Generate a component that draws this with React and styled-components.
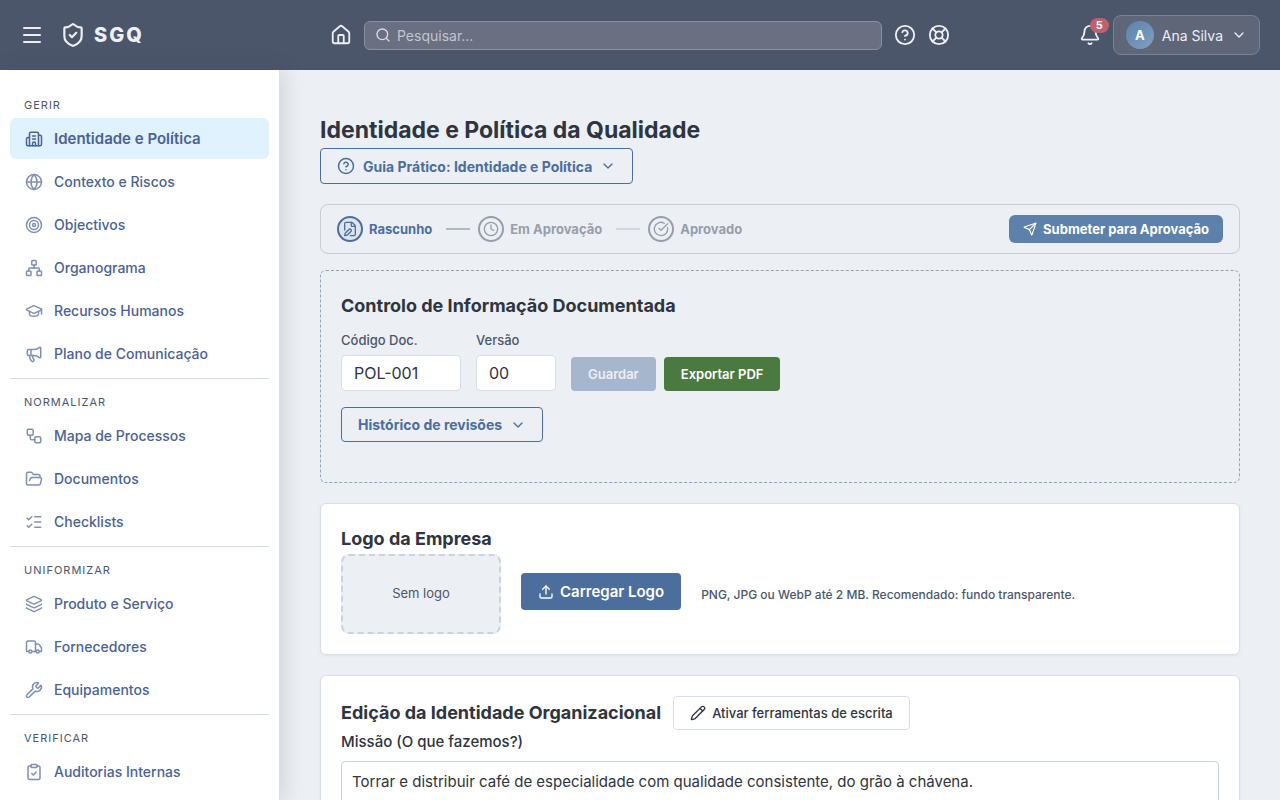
import React, { useState } from 'react';
import styled, { createGlobalStyle, css } from 'styled-components';
import {
  Bell,
  Building2,
  ChevronDown,
  CircleCheckBig,
  CircleHelp,
  ClipboardCheck,
  Clock,
  FilePen,
  FolderOpen,
  Globe,
  GraduationCap,
  House,
  Layers,
  LifeBuoy,
  ListChecks,
  Megaphone,
  Menu,
  Network,
  Pencil,
  Search,
  Send,
  ShieldCheck,
  Target,
  Truck,
  Upload,
  Workflow,
  Wrench,
} from 'lucide-react';

const GlobalStyle = createGlobalStyle`
  * {
    box-sizing: border-box;
  }

  body {
    margin: 0;
    background: #eceff4;
    color: #2e3440;
    font-family: Inter, sans-serif;
    font-size: 15px;
  }

  button, input, textarea {
    font-family: inherit;
  }
`

const Page = styled.div`
  display: flex;
  flex-direction: column;
  height: 100vh;
  overflow: hidden;
`

const Header = styled.header`
  display: grid;
  grid-template-columns: 1fr minmax(0, 620px) 1fr;
  align-items: center;
  flex-shrink: 0;
  height: 70px;
  padding: 0 20px;
  background: #4c566a;
  color: #eceff4;
`

const HeaderLeft = styled.div`
  display: flex;
  align-items: center;
  gap: 16px;
`

const HeaderCenter = styled.div`
  display: flex;
  align-items: center;
  gap: 12px;
`

const HeaderRight = styled.div`
  display: flex;
  align-items: center;
  justify-content: flex-end;
  gap: 12px;
`

const IconButton = styled.button`
  position: relative;
  display: flex;
  padding: 0;
  border: none;
  background: none;
  color: inherit;
  cursor: pointer;
`

const Brand = styled.a`
  display: flex;
  align-items: center;
  gap: 8px;
  color: inherit;
  font-size: 20px;
  font-weight: 800;
  letter-spacing: 2px;
  text-decoration: none;
`

const SearchBox = styled.label`
  display: flex;
  flex: 1;
  align-items: center;
  gap: 6px;
  height: 29px;
  padding: 0 10px;
  border: 1px solid #8a90a0;
  border-radius: 6px;
  background: #6b6f82;
  color: #d8dee9;
`

const SearchInput = styled.input`
  flex: 1;
  min-width: 0;
  padding: 0;
  border: none;
  outline: none;
  background: none;
  color: #eceff4;
  font-size: 14px;

  &::placeholder {
    color: #c2c6d0;
    opacity: 1;
  }
`

const Badge = styled.span`
  position: absolute;
  top: -6px;
  right: -8px;
  height: 15px;
  padding: 0 6px;
  border-radius: 8px;
  background: #bf616a;
  color: white;
  font-size: 11px;
  font-weight: 700;
  line-height: 15px;
`

const UserButton = styled.button`
  display: flex;
  align-items: center;
  gap: 8px;
  height: 40px;
  padding: 0 12px;
  border: 1px solid #7b8392;
  border-radius: 8px;
  background: #5e6678;
  color: #eceff4;
  font-size: 14px;
  cursor: pointer;
`

const Avatar = styled.span`
  display: flex;
  align-items: center;
  justify-content: center;
  width: 28px;
  height: 28px;
  border-radius: 50%;
  background: linear-gradient(135deg, #5e81ac, #81a1c1);
  color: white;
  font-size: 13px;
  font-weight: 700;
`

const Body = styled.div`
  display: flex;
  flex: 1;
  min-height: 0;
`

const Sidebar = styled.nav`
  width: 280px;
  flex-shrink: 0;
  padding: 12px 10px;
  overflow: hidden;
  border-right: 1px solid #d8dee9;
  background: white;
  box-shadow: 4px 0 20px rgba(46, 52, 64, 0.15);
`

const NavGroup = styled.div`
  display: flex;
  flex-direction: column;
  gap: 2px;
  padding-bottom: 4px;

  & + & {
    border-top: 1px solid #d3daea;
  }
`

const NavTitle = styled.div`
  height: 34px;
  padding: 16px 14px 0;
  color: #4c566a;
  font-size: 11px;
  font-weight: 400;
  letter-spacing: 1px;
  line-height: 14px;
`

const NavItem = styled.a`
  display: flex;
  align-items: center;
  gap: 10px;
  height: 41px;
  padding: 0 14px;
  border-radius: 6px;
  background: ${props => props.$active ? "#e0f2fe" : "transparent"};
  color: #4a6294;
  font-size: ${props => props.$active ? "15px" : "14px"};
  font-weight: ${props => props.$active ? 600 : 500};
  text-decoration: none;

  svg {
    width: 20px;
    height: 18px;
    opacity: ${props => props.$active ? 1 : 0.7};
  }
`

const Main = styled.main`
  flex: 1;
  min-width: 0;
  padding: 43px 40px;
  overflow: hidden;
`

const PageTitle = styled.h1`
  margin: 0 0 1px;
  font-size: 23px;
  font-weight: 700;
  line-height: 34px;
`

const OutlineButton = styled.button`
  display: flex;
  align-items: center;
  gap: 8px;
  height: ${props => props.$tall ? "36px" : "35px"};
  padding: 0 16px;
  border: 1px solid #4c6e9c;
  border-radius: 4px;
  background: transparent;
  color: #4c6e9c;
  font-size: 14px;
  font-weight: 700;
  cursor: pointer;
`

const WorkflowBar = styled.div`
  display: flex;
  align-items: center;
  justify-content: space-between;
  height: 50px;
  margin: 20px 0 16px;
  padding: 0 16px;
  border: 1px solid #c9ced6;
  border-radius: 8px;
`

const Steps = styled.ol`
  display: flex;
  align-items: center;
  gap: 8px;
  margin: 0;
  padding: 0;
  list-style: none;
`

const Step = styled.li`
  display: flex;
  align-items: center;
  gap: 6px;
  padding-right: 6px;
  color: ${props => props.$current ? "#4c6e9c" : "#979eab"};
  font-size: 13px;
  font-weight: 700;
`

const StepCircle = styled.span`
  display: flex;
  align-items: center;
  justify-content: center;
  width: 26px;
  height: 26px;
  border: 2px solid currentColor;
  border-radius: 50%;
  background: ${props => props.$current ? "#dde4ed" : "transparent"};
`

const StepLine = styled.li`
  width: 24px;
  height: 2px;
  background: ${props => props.$light ? "#cfd4dd" : "#b2b8c4"};
`

const SubmitButton = styled.button`
  display: flex;
  align-items: center;
  gap: 6px;
  height: 28px;
  padding: 0 14px;
  border: none;
  border-radius: 6px;
  background: #5e81ac;
  color: white;
  font-size: 13px;
  font-weight: 700;
  cursor: pointer;
`

const Card = styled.section`
  margin-bottom: 20px;
  padding: 20px;
  border: 1px solid #d8dee9;
  border-radius: 6px;
  background: white;
  box-shadow: 0 1px 3px rgba(46, 52, 64, 0.06);

  ${props => props.$dashed && css`
    padding-bottom: 40px;
    border: 1px dashed #8fa3bf;
    background: transparent;
    box-shadow: none;
  `}
`

const CardTitle = styled.h2`
  margin: 0;
  font-size: 18px;
  font-weight: 700;
  line-height: 30px;
`

const FieldRow = styled.div`
  display: flex;
  align-items: flex-end;
  gap: 15px;
  margin: 9px 0 16px;
`

const Field = styled.label`
  display: flex;
  flex-direction: column;
  gap: 5px;
  width: ${props => props.$wide ? "120px" : "80px"};
  color: #4c566a;
  font-size: 13px;
  font-weight: 500;
  line-height: 20px;
`

const TextInput = styled.input`
  width: 100%;
  height: 36px;
  padding: 0 12px;
  border: 1px solid #d8dee9;
  border-radius: 4px;
  background: white;
  color: #2e3440;
  font-size: 16px;
`

const ButtonGroup = styled.div`
  display: flex;
  gap: 8px;
`

const SmallButton = styled.button`
  height: 34px;
  padding: 0 17px;
  border: none;
  border-radius: 4px;
  background: ${props => props.$green ? "#4a7a3f" : "#a6b6cd"};
  color: ${props => props.$green ? "white" : "#eceff4"};
  font-size: 13px;
  font-weight: 600;
`

const LogoRow = styled.div`
  display: flex;
  align-items: center;
  gap: 20px;
`

const LogoPreview = styled.div`
  display: flex;
  align-items: center;
  justify-content: center;
  width: 160px;
  height: 80px;
  padding-bottom: 2px;
  border: 2px dashed #c8d3e3;
  border-radius: 8px;
  background: #eceff4;
  color: #4c566a;
  font-size: 13px;
`

const UploadButton = styled.button`
  display: flex;
  align-items: center;
  gap: 6px;
  height: 37px;
  margin-bottom: 5px;
  padding: 0 17px;
  border: none;
  border-radius: 4px;
  background: #4c6e9c;
  color: white;
  font-size: 15px;
  font-weight: 600;
  cursor: pointer;
`

const Hint = styled.span`
  color: #4c566a;
  font-size: 12px;
  font-weight: 500;
`

const TitleRow = styled.div`
  display: flex;
  align-items: center;
  gap: 12px;
`

const ToolsButton = styled.button`
  display: flex;
  align-items: center;
  gap: 6px;
  height: 34px;
  padding: 0 16px;
  border: 1px solid #d8dee9;
  border-radius: 4px;
  background: white;
  color: #2e3440;
  font-size: 13px;
  font-weight: 500;
  cursor: pointer;
`

const TextLabel = styled.label`
  display: block;
  margin-bottom: 7px;
  font-weight: 500;
  line-height: 24px;
`

const TextArea = styled.textarea`
  display: block;
  width: 100%;
  height: 100px;
  padding: 8px 10px;
  border: 1px solid #c8d3e0;
  border-radius: 4px;
  color: #2e3440;
  font-size: 15px;
  line-height: 24px;
  resize: none;
`

const groups = [
  {
    title: 'GERIR',
    items: [
      { label: 'Identidade e Política', icon: Building2 },
      { label: 'Contexto e Riscos', icon: Globe },
      { label: 'Objectivos', icon: Target },
      { label: 'Organograma', icon: Network },
      { label: 'Recursos Humanos', icon: GraduationCap },
      { label: 'Plano de Comunicação', icon: Megaphone },
    ],
  },
  {
    title: 'NORMALIZAR',
    items: [
      { label: 'Mapa de Processos', icon: Workflow },
      { label: 'Documentos', icon: FolderOpen },
      { label: 'Checklists', icon: ListChecks },
    ],
  },
  {
    title: 'UNIFORMIZAR',
    items: [
      { label: 'Produto e Serviço', icon: Layers },
      { label: 'Fornecedores', icon: Truck },
      { label: 'Equipamentos', icon: Wrench },
    ],
  },
  {
    title: 'VERIFICAR',
    items: [
      { label: 'Auditorias Internas', icon: ClipboardCheck },
    ],
  },
]

const App = () => {
  const [active, setActive] = useState('Identidade e Política')
  const [code, setCode] = useState('POL-001')
  const [version, setVersion] = useState('00')
  const [mission, setMission] = useState('Torrar e distribuir café de especialidade com qualidade consistente, do grão à chávena.')

  return (
    <>
      <GlobalStyle />
      <Page>
        <Header>
          <HeaderLeft>
            <IconButton aria-label="Menu"><Menu size={24} /></IconButton>
            <Brand href="#"><ShieldCheck size={26} />SGQ</Brand>
          </HeaderLeft>
          <HeaderCenter>
            <IconButton aria-label="Início"><House size={22} /></IconButton>
            <SearchBox>
              <Search size={16} />
              <SearchInput placeholder="Pesquisar..." aria-label="Pesquisar" />
            </SearchBox>
            <IconButton aria-label="Ajuda"><CircleHelp size={22} /></IconButton>
            <IconButton aria-label="Suporte"><LifeBuoy size={22} /></IconButton>
          </HeaderCenter>
          <HeaderRight>
            <IconButton aria-label="Notificações">
              <Bell size={22} />
              <Badge>5</Badge>
            </IconButton>
            <UserButton>
              <Avatar>A</Avatar>
              Ana Silva
              <ChevronDown size={16} />
            </UserButton>
          </HeaderRight>
        </Header>
        <Body>
          <Sidebar>
            {groups.map(group => (
              <NavGroup key={group.title}>
                <NavTitle>{group.title}</NavTitle>
                {group.items.map(({ label, icon: Icon }) => (
                  <NavItem key={label} href="#" $active={label === active} onClick={() => setActive(label)}>
                    <Icon />
                    {label}
                  </NavItem>
                ))}
              </NavGroup>
            ))}
          </Sidebar>
          <Main>
            <PageTitle>Identidade e Política da Qualidade</PageTitle>
            <OutlineButton $tall>
              <CircleHelp size={18} />
              Guia Prático: Identidade e Política
              <ChevronDown size={16} />
            </OutlineButton>

            <WorkflowBar>
              <Steps>
                <Step $current>
                  <StepCircle $current><FilePen size={16} /></StepCircle>
                  Rascunho
                </Step>
                <StepLine />
                <Step>
                  <StepCircle><Clock size={16} /></StepCircle>
                  Em Aprovação
                </Step>
                <StepLine $light />
                <Step>
                  <StepCircle><CircleCheckBig size={16} /></StepCircle>
                  Aprovado
                </Step>
              </Steps>
              <SubmitButton><Send size={14} />Submeter para Aprovação</SubmitButton>
            </WorkflowBar>

            <Card $dashed>
              <CardTitle>Controlo de Informação Documentada</CardTitle>
              <FieldRow>
                <Field $wide>
                  Código Doc.
                  <TextInput value={code} onChange={e => setCode(e.target.value)} />
                </Field>
                <Field>
                  Versão
                  <TextInput value={version} onChange={e => setVersion(e.target.value)} />
                </Field>
                <ButtonGroup>
                  <SmallButton disabled>Guardar</SmallButton>
                  <SmallButton $green>Exportar PDF</SmallButton>
                </ButtonGroup>
              </FieldRow>
              <OutlineButton>
                Histórico de revisões
                <ChevronDown size={16} />
              </OutlineButton>
            </Card>

            <Card>
              <CardTitle>Logo da Empresa</CardTitle>
              <LogoRow>
                <LogoPreview>Sem logo</LogoPreview>
                <UploadButton><Upload size={16} />Carregar Logo</UploadButton>
                <Hint>PNG, JPG ou WebP até 2 MB. Recomendado: fundo transparente.</Hint>
              </LogoRow>
            </Card>

            <Card>
              <TitleRow>
                <CardTitle>Edição da Identidade Organizacional</CardTitle>
                <ToolsButton><Pencil size={16} />Ativar ferramentas de escrita</ToolsButton>
              </TitleRow>
              <TextLabel htmlFor="missao">Missão (O que fazemos?)</TextLabel>
              <TextArea id="missao" value={mission} onChange={e => setMission(e.target.value)} />
            </Card>
          </Main>
        </Body>
      </Page>
    </>
  );
}

export default App;
